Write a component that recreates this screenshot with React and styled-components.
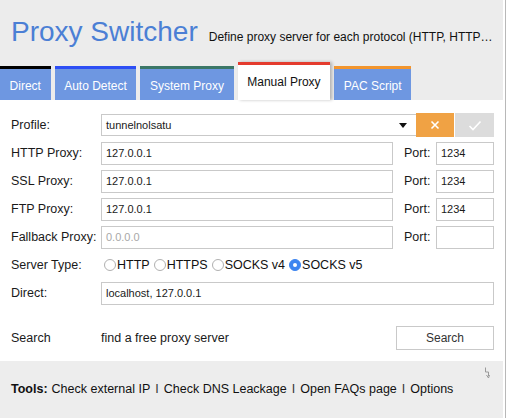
import React from "react";
import styled, { createGlobalStyle } from "styled-components";

const GlobalStyle = createGlobalStyle`
  html, body {
    margin: 0;
    padding: 0;
    background: #fff;
  }
  body {
    font-family: "Liberation Sans", Arial, Helvetica, sans-serif;
    color: #1a1a1a;
  }
  * { box-sizing: border-box; }
`;

const Frame = styled.div`
  width: 506px;
  height: 418px;
  padding-right: 2px;
  border-right: 1px solid #b8b8b8;
  overflow: hidden;
`;

const Panel = styled.div`
  width: 503px;
  height: 100%;
  display: flex;
  flex-direction: column;
`;

const Header = styled.div`
  background: #ececec;
  padding: 18px 9px 0 11px;
`;

const TitleRow = styled.div`
  display: flex;
  align-items: baseline;
  gap: 11px;
  height: 28px;
`;

const Title = styled.h1`
  margin: 0;
  font-size: 28px;
  line-height: 28px;
  font-weight: normal;
  color: #4b7fd5;
  white-space: nowrap;
`;

const Subtitle = styled.div`
  font-size: 12px;
  color: #111;
  white-space: nowrap;
`;

const Tabs = styled.div`
  display: flex;
  align-items: flex-end;
  gap: 4px;
  margin: 16px 0 0 -11px;
  height: 38px;
`;

const Tab = styled.div`
  height: ${(p) => (p.active ? "38px" : "34px")};
  padding: 10px 9.6px 0;
  border-top: 3px solid ${(p) => p.accent};
  background: ${(p) => (p.active ? "#fff" : "#6e97e1")};
  color: ${(p) => (p.active ? "#111" : "#fff")};
  font-size: 12px;
  line-height: 14px;
  white-space: nowrap;
  box-shadow: ${(p) => (p.active ? "2px 0 3px rgba(0,0,0,0.25)" : "none")};
  position: relative;
  z-index: ${(p) => (p.active ? 1 : 0)};
`;

const Body = styled.div`
  flex: 1;
  background: #fff;
  padding: 13px 9px 11px 11px;
  display: flex;
  flex-direction: column;
  gap: 4px;
`;

const Row = styled.div`
  display: flex;
  align-items: center;
  height: 24px;
  margin-top: ${(p) => (p.spaced ? "17px" : "0")};
`;

const Label = styled.div`
  width: 90px;
  flex-shrink: 0;
  font-size: 12.5px;
  color: #1a1a1a;
  white-space: nowrap;
`;

const TextBox = styled.div`
  height: 23px;
  border: 1px solid #c9c9c9;
  padding: 0 4px;
  display: flex;
  align-items: center;
  font-size: 11px;
  color: ${(p) => (p.placeholder ? "#a8a8a8" : "#1a1a1a")};
  width: ${(p) => p.w || "auto"};
  flex: ${(p) => (p.w ? "none" : "1")};
`;

const PortLabel = styled.div`
  width: 32px;
  margin-left: 11px;
  font-size: 12.5px;
`;

const Select = styled.div`
  flex: 1;
  height: 22px;
  border: 1px solid #c9c9c9;
  border-right: none;
  padding: 0 9px 0 4px;
  display: flex;
  align-items: center;
  justify-content: space-between;
  font-size: 11px;
`;

const Caret = styled.span`
  width: 0;
  height: 0;
  border-left: 4px solid transparent;
  border-right: 4px solid transparent;
  border-top: 5px solid #111;
`;

const IconButton = styled.div`
  width: ${(p) => p.w}px;
  height: 24px;
  background: ${(p) => p.bg};
  display: flex;
  align-items: center;
  justify-content: center;
  margin-left: ${(p) => p.gap || 0}px;
`;

const Radios = styled.div`
  display: flex;
  align-items: center;
  gap: 4px;
  padding-left: 3px;
`;

const RadioOption = styled.div`
  display: flex;
  align-items: center;
  gap: 1px;
  font-size: 12.5px;
  color: #111;
`;

const RadioDot = styled.span`
  width: 12px;
  height: 12px;
  border-radius: 50%;
  border: 1px solid ${(p) => (p.checked ? "#3d85f0" : "#b0b0b0")};
  background: ${(p) => (p.checked ? "#3d85f0" : "#fff")};
  display: flex;
  align-items: center;
  justify-content: center;
  &::after {
    content: "";
    width: 4px;
    height: 4px;
    border-radius: 50%;
    background: ${(p) => (p.checked ? "#fff" : "transparent")};
  }
`;

const SearchHint = styled.div`
  flex: 1;
  font-size: 12.5px;
  color: #1a1a1a;
`;

const SearchButton = styled.div`
  width: 98px;
  height: 24px;
  border: 1px solid #c9c9c9;
  background: #fff;
  display: flex;
  align-items: center;
  justify-content: center;
  font-size: 12px;
  color: #333;
`;

const Footer = styled.div`
  height: 57px;
  background: #ededed;
  padding: 6px 13px 0 11px;
  display: flex;
  flex-direction: column;
`;

const FooterIcon = styled.div`
  height: 12px;
  display: flex;
  justify-content: flex-end;
`;

const Tools = styled.div`
  margin-top: 3px;
  font-size: 12.5px;
  line-height: 15px;
  color: #111;
  white-space: nowrap;
  b { font-weight: bold; margin-right: 4px; }
`;

const Sep = styled.span`
  margin: 0 5px;
  color: #333;
`;

const tabs = [
  { name: "Direct", accent: "#000" },
  { name: "Auto Detect", accent: "#2d4ef5" },
  { name: "System Proxy", accent: "#3b7767" },
  { name: "Manual Proxy", accent: "#e43b2e", active: true },
  { name: "PAC Script", accent: "#f2952e" },
];

const proxies = [
  { label: "HTTP Proxy:", host: "127.0.0.1", port: "1234" },
  { label: "SSL Proxy:", host: "127.0.0.1", port: "1234" },
  { label: "FTP Proxy:", host: "127.0.0.1", port: "1234" },
  { label: "Fallback Proxy:", host: "0.0.0.0", port: "", placeholder: true },
];

const types = ["HTTP", "HTTPS", "SOCKS v4", "SOCKS v5"];
const tools = ["Check external IP", "Check DNS Leackage", "Open FAQs page", "Options"];

export default function App() {
  return (
    <Frame>
      <GlobalStyle />
      <Panel>
        <Header>
          <TitleRow>
            <Title>Proxy Switcher</Title>
            <Subtitle>Define proxy server for each protocol (HTTP, HTTP…</Subtitle>
          </TitleRow>
          <Tabs>
            {tabs.map((t) => (
              <Tab key={t.name} accent={t.accent} active={t.active}>{t.name}</Tab>
            ))}
          </Tabs>
        </Header>

        <Body>
          <Row>
            <Label>Profile:</Label>
            <Select>
              <span>tunnelnolsatu</span>
              <Caret />
            </Select>
            <IconButton w={38} bg="#f0a244">
              <svg width="10" height="10" viewBox="0 0 10 10">
                <path d="M1.5 1.5 L8.5 8.5 M8.5 1.5 L1.5 8.5" stroke="#fff" strokeWidth="1.6" />
              </svg>
            </IconButton>
            <IconButton w={39} bg="#dcdcdc" gap={1}>
              <svg width="14" height="11" viewBox="0 0 14 11">
                <path d="M1.5 6 L5 9.5 L12.5 1.5" stroke="#fff" strokeWidth="1.6" fill="none" />
              </svg>
            </IconButton>
          </Row>

          {proxies.map((p) => (
            <Row key={p.label}>
              <Label>{p.label}</Label>
              <TextBox placeholder={p.placeholder ? 1 : 0}>{p.host}</TextBox>
              <PortLabel>Port:</PortLabel>
              <TextBox w="58px">{p.port}</TextBox>
            </Row>
          ))}

          <Row>
            <Label>Server Type:</Label>
            <Radios>
              {types.map((t) => (
                <RadioOption key={t}>
                  <RadioDot checked={t === "SOCKS v5"} />
                  {t}
                </RadioOption>
              ))}
            </Radios>
          </Row>

          <Row>
            <Label>Direct:</Label>
            <TextBox>localhost, 127.0.0.1</TextBox>
          </Row>

          <Row spaced>
            <Label>Search</Label>
            <SearchHint>find a free proxy server</SearchHint>
            <SearchButton>Search</SearchButton>
          </Row>
        </Body>

        <Footer>
          <FooterIcon>
            <svg width="6" height="12" viewBox="0 0 6 12">
              <path d="M1.5 0.5 V5 H4.5 V9 M2.5 8 L4.5 11 L5.5 8" stroke="#9a9a9a" strokeWidth="1" fill="none" />
            </svg>
          </FooterIcon>
          <Tools>
            <b>Tools:</b>
            {tools.map((t, i) => (
              <React.Fragment key={t}>
                {i > 0 && <Sep>I</Sep>}
                {t}
              </React.Fragment>
            ))}
          </Tools>
        </Footer>
      </Panel>
    </Frame>
  );
}
